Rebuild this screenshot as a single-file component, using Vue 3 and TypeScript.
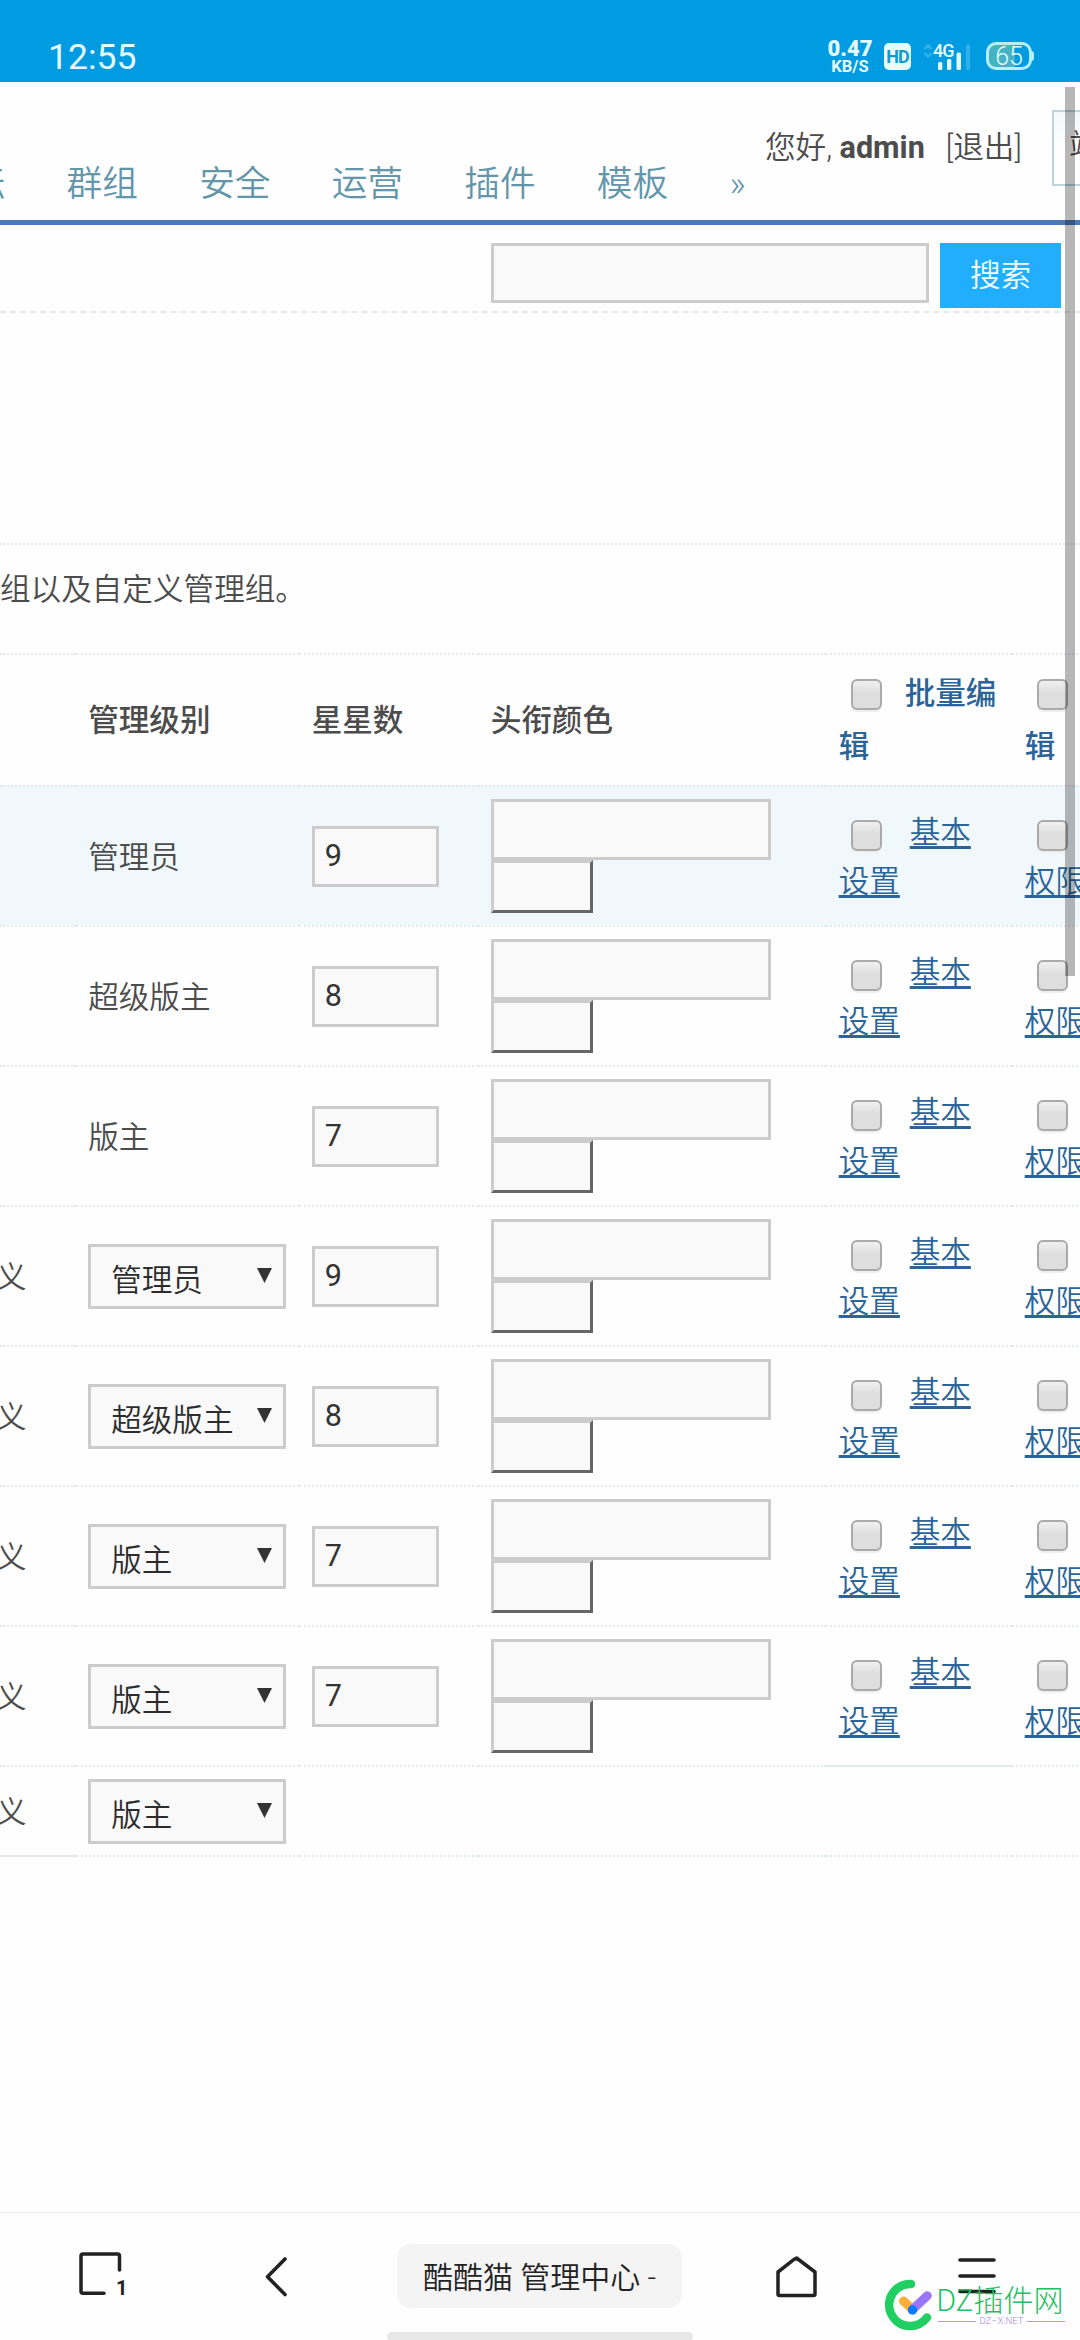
<script setup lang="ts">
interface GroupRow {
  level: string
  stars: string
  custom: boolean
  active?: boolean
  isNew?: boolean
}

const navItems: string[] = ['论坛', '群组', '安全', '运营', '插件', '模板', '»']

const rows: GroupRow[] = [
  { level: '管理员', stars: '9', custom: false, active: true },
  { level: '超级版主', stars: '8', custom: false },
  { level: '版主', stars: '7', custom: false },
  { level: '管理员', stars: '9', custom: true },
  { level: '超级版主', stars: '8', custom: true },
  { level: '版主', stars: '7', custom: true },
  { level: '版主', stars: '7', custom: true },
  { level: '版主', stars: '', custom: true, isNew: true },
]
</script>

<template>
  <div class="screen">
    <div class="status">
      <span class="clock">12:55</span>
      <div class="speed"><b>0.47</b><small>KB/S</small></div>
      <span class="hd">HD</span>
      <div class="signal">
        <svg class="arrows" width="10" height="16" viewBox="0 0 10 16" fill="none" stroke="#35b3ea" stroke-width="2.4">
          <path d="M1.5 6 5 2.5 8.500 6M1.500 10 5 13.500 8.500 10" />
        </svg>
        <span class="net">4G</span>
        <svg class="bars" width="34" height="28" viewBox="0 0 34 28">
          <rect x="1" y="19" width="4.300" height="8" rx="1.500" fill="#e6fdff" />
          <rect x="10" y="16" width="4.300" height="11" rx="1.500" fill="#e6fdff" />
          <rect x="19.500" y="9.500" width="4.500" height="17.500" rx="1.500" fill="#e6fdff" />
          <rect x="29" y="1" width="4" height="26" rx="1.500" fill="#2fb0e8" />
        </svg>
      </div>
      <div class="battery"><span>65</span></div>
    </div>

    <div class="page">
      <header class="top">
        <nav class="nav">
          <a v-for="item in navItems" :key="item">{{ item }}</a>
        </nav>
        <div class="hello">您好, <b>admin</b><span class="logout">[退出]</span></div>
        <div class="site">站点首页</div>
      </header>

      <div class="search">
        <div class="field"></div>
        <button class="go">搜索</button>
      </div>

      <div class="tip">组以及自定义管理组。</div>

      <div class="table">
        <div class="row head">
          <div class="cell"></div>
          <div class="cell">管理级别</div>
          <div class="cell">星星数</div>
          <div class="cell">头衔颜色</div>
          <div v-for="n in 2" :key="n" class="cell ops">
            <div class="line1"><i class="check"></i><span v-if="n === 1">批量编</span></div>
            <div class="line2">辑</div>
          </div>
        </div>

        <div v-for="(row, i) in rows" :key="i" class="row" :class="{ active: row.active, fresh: row.isNew }">
          <div class="cell kind"><span v-if="row.custom">自定义</span></div>
          <div class="cell">
            <div v-if="row.custom" class="select">
              <span>{{ row.level }}</span>
              <svg width="15" height="15" viewBox="0 0 15 15"><path d="M0 0h15L7.500 15z" fill="#333" /></svg>
            </div>
            <span v-else class="level">{{ row.level }}</span>
          </div>
          <div class="cell"><div v-if="!row.isNew" class="stars">{{ row.stars }}</div></div>
          <div class="cell colors">
            <template v-if="!row.isNew">
              <div class="hex"></div>
              <div class="swatch"></div>
            </template>
          </div>
          <div v-for="name in ['基本设置', '权限设置']" :key="name" class="cell ops">
            <template v-if="!row.isNew">
              <div class="line1">
                <i class="check"></i><a v-if="name === '基本设置'">基本</a>
              </div>
              <div class="line2"><a>{{ name === '基本设置' ? '设置' : '权限' }}</a></div>
            </template>
          </div>
        </div>
        <div class="row end">
          <div v-for="n in 6" :key="n" class="cell"></div>
        </div>
      </div>
      <div class="scroll"></div>
    </div>

    <footer class="toolbar">
      <svg class="tabs" width="48" height="48" viewBox="0 0 48 48" fill="none" stroke="#222" stroke-width="3.500" stroke-linecap="round" stroke-linejoin="round">
        <path d="M25 42.200H4q-2 0-2-2V5q0-2 2-2h34.500q2 0 2 2v14" />
        <text x="37" y="44" class="count">1</text>
      </svg>
      <svg class="back" width="24" height="42" viewBox="0 0 24 42" fill="none" stroke="#222" stroke-width="3.600" stroke-linecap="round" stroke-linejoin="round">
        <path d="M20 3 2.500 20.800 20 38.500" />
      </svg>
      <div class="title">酷酷猫 管理中心 -</div>
      <svg class="home" width="44" height="44" viewBox="0 0 44 44" fill="none" stroke="#222" stroke-width="3.500" stroke-linejoin="round">
        <path d="M22.500 3 41 17v22q0 1.500-1.500 1.500h-34Q4 40.500 4 39V17L19.700 4.700Q21.800 2.900 23.600 4.300Z" />
      </svg>
      <svg class="menu" width="40" height="40" viewBox="0 0 40 40" stroke="#222" stroke-width="3.600" stroke-linecap="round">
        <path d="M3 5h34M3 21h34M3 36.500h34" />
      </svg>
      <div class="handle"></div>
    </footer>

    <div class="mark">
      <svg width="50" height="54" viewBox="0 0 50 54" fill="none" stroke-linecap="round">
        <path d="M27 6A21 21 0 1 0 43 39.500" stroke="#20cf62" stroke-width="8.500" />
        <path d="M19.500 23 28.500 31.500" stroke="#fbb034" stroke-width="9" />
        <path d="M28.500 31.500 43.300 17.700" stroke="#9a76fa" stroke-width="9" />
        <circle cx="28.500" cy="32" r="4.700" fill="#077bff" />
      </svg>
      <div class="brand">
        <span class="name">DZ插件网</span>
        <span class="domain"><i></i>DZ–X.NET<i></i></span>
      </div>
    </div>
  </div>
</template>

<style>
body {
  background: #fefefe;
  overflow: hidden;
}
</style>

<style scoped>
.screen {
  position: relative;
  display: flex;
  flex-direction: column;
  width: 1080px;
  height: 2340px;
  overflow: hidden;
  background: #fefefe;
  color: #4c4c4c;
  font-family: Roboto, 'Noto Sans CJK SC', sans-serif;
  font-size: 30.6px;
  font-weight: 350;
  box-sizing: border-box;
}
.screen *,
.screen *::before {
  box-sizing: border-box;
}
.status {
  height: 82px;
  flex: none;
  background: #009be0;
  color: #e6fdff;
  display: flex;
  align-items: flex-start;
  padding-left: 48px;
}
.clock {
  font-size: 35.5px;
  font-weight: 400;
  line-height: 40px;
  margin-top: 37px;
  width: 780px;
}
.speed {
  width: 44px;
  margin-top: 40px;
  display: flex;
  flex-direction: column;
  align-items: center;
  font-weight: 700;
}
.speed b {
  font-size: 22px;
  line-height: 18px;
}
.speed small {
  font-size: 16.5px;
  line-height: 17px;
}
.hd {
  margin: 43px 0 0 12px;
  width: 27px;
  height: 27px;
  border-radius: 5px;
  background: #e6fdff;
  color: #1698cc;
  font-size: 18px;
  font-weight: 700;
  line-height: 28px;
  text-align: center;
  letter-spacing: -1px;
}
.signal {
  position: relative;
  margin: 43px 0 0 12px;
  width: 49px;
  height: 28px;
}
.arrows {
  position: absolute;
  left: 0;
  top: 0;
}
.net {
  position: absolute;
  left: 10px;
  top: -1px;
  font-size: 18px;
  line-height: 18px;
  font-weight: 500;
  letter-spacing: -1px;
}
.bars {
  position: absolute;
  left: 14px;
  top: 0;
}
.battery {
  position: relative;
  margin: 42px 0 0 14px;
  width: 46px;
  height: 28px;
  border: 3px solid #b5f0fa;
  border-radius: 10px;
  background: linear-gradient(90deg, #45b3c4 65%, #009be0 65%);
  font-size: 25px;
  line-height: 23px;
  text-align: center;
}
.battery::before {
  content: '';
  position: absolute;
  right: -5px;
  top: 6px;
  width: 3px;
  height: 10px;
  border-radius: 0 3px 3px 0;
  background: #b5f0fa;
}
.page {
  position: relative;
  flex: 1;
}
.top {
  height: 143px;
  border-bottom: 5px solid #4a78b8;
  display: flex;
  overflow: hidden;
}
.nav {
  width: 765px;
  flex: none;
  display: flex;
  gap: 61.2px;
  padding-top: 77px;
  font-size: 35.7px;
  line-height: 50px;
  color: #6396aa;
}
.nav a {
  flex: none;
}
.nav a:first-child {
  margin-left: -66px;
}
.hello {
  width: 287px;
  flex: none;
  line-height: 44px;
  padding-top: 44px;
  white-space: pre;
}
.hello b {
  font-weight: 700;
}
.logout {
  margin-left: 21px;
}
.site {
  flex: none;
  width: 160px;
  height: 76px;
  margin-top: 28px;
  padding-left: 15px;
  border: 2px solid #bcd3de;
  background: linear-gradient(#f3f8fb, #fefefe 50%);
  line-height: 68px;
}
.search {
  height: 88px;
  padding: 18px 0 0 491px;
  border-bottom: 2px dashed #e8e8e8;
  display: flex;
  align-items: flex-start;
  gap: 11px;
}
.field {
  width: 438px;
  height: 60px;
  border: 3px solid #ccc;
  background: #f9f9f9;
}
.go {
  width: 121px;
  height: 65px;
  padding: 0;
  border: 0;
  background: #22aeff;
  color: #f2fdff;
  font: inherit;
  line-height: 65px;
}
.tip {
  margin-top: 230px;
  height: 110px;
  border-top: 2px dotted #e0ebee;
  line-height: 44px;
  padding-top: 23px;
}
.row {
  display: grid;
  grid-template-columns: 75.5px 223.5px 179px 348px 186px 186px;
  height: 140px;
}
.cell {
  border-top: 2px dotted #dfebee;
  padding-left: 12.7px;
  display: flex;
  align-items: center;
  white-space: nowrap;
}
.head {
  height: 132px;
  font-weight: 500;
}
.head .cell:not(.ops) {
  padding-bottom: 5px;
}
.level,
.kind span {
  margin-bottom: 2px;
}
.active .cell {
  background: #f0f8fc;
}
.fresh {
  height: 90px;
}
.fresh .cell:nth-child(5),
.end .cell:first-child {
  border-top-style: solid;
}
.kind {
  justify-content: flex-end;
  padding: 0 49px 0 0;
}
.end {
  height: 2px;
}
.select {
  width: 198px;
  height: 65px;
  border: 3px solid #ccc;
  background: #f9f9f9;
  color: #2c2c2c;
  display: flex;
  justify-content: space-between;
  align-items: center;
  padding: 3px 11px 0 20px;
}
.select svg {
  margin-bottom: 4px;
}
.stars {
  width: 127px;
  height: 61px;
  border: 3px solid #ccc;
  background: #f9f9f9;
  color: #333;
  padding-left: 10px;
  font-weight: 400;
  line-height: 53px;
}
.colors {
  flex-direction: column;
  align-items: flex-start;
  justify-content: flex-start;
}
.row:not(.head) .colors {
  padding-top: 12px;
}
.head .colors {
  justify-content: center;
}
.hex {
  width: 280px;
  height: 61px;
  border: 3px solid #ccc;
  background: #f9f9f9;
}
.swatch {
  width: 102px;
  height: 53px;
  border: 3px solid;
  border-color: #ccc #666 #666 #ccc;
  background: #f9f9f9;
}
.ops {
  display: flex;
  flex-direction: column;
  align-items: flex-start;
  justify-content: flex-start;
  padding-top: 21px;
  color: #2a6498;
}
.line1 {
  display: flex;
  height: 49px;
  line-height: 50px;
}
.line1 a {
  margin-left: 28px;
}
.line1 span {
  margin-left: 23px;
}
.line2 {
  line-height: 49px;
}
.ops a {
  text-decoration: underline;
  text-decoration-thickness: 3px;
  text-underline-offset: 3px;
}
.check {
  width: 31px;
  height: 31px;
  margin: 12px 0 0 12px;
  border: 2px solid #aaa;
  border-radius: 6px;
  background: linear-gradient(#f0f0f0, #dedede 45%);
  box-shadow: 0 2px 1px #eee;
}
.head .ops {
  padding-top: 12px;
}
.head .line1 {
  height: 53px;
}
.head .line1 span {
  line-height: 53px;
}
.head .line2 {
  line-height: 53px;
}
.scroll {
  position: absolute;
  left: 1065px;
  top: 5px;
  width: 10px;
  height: 889px;
  background: rgba(0, 0, 0, 0.28);
}
.toolbar {
  position: relative;
  height: 128px;
  flex: none;
  border-top: 1px solid #ededed;
  display: flex;
  align-items: flex-start;
  color: #222;
}
.tabs {
  margin: 38px 0 0 79px;
}
.count {
  font: 700 20px Roboto, sans-serif;
  fill: #222;
  stroke: none;
}
.back {
  margin: 43px 0 0 138px;
}
.title {
  width: 285px;
  height: 64px;
  margin: 31px 0 0 108px;
  border-radius: 14px;
  background: #f4f4f4;
  font-size: 30px;
  line-height: 67px;
  text-align: center;
  white-space: nowrap;
}
.home {
  margin: 42px 0 0 92px;
}
.menu {
  margin: 42px 0 0 139px;
}
.handle {
  position: absolute;
  left: 387px;
  top: 119px;
  width: 306px;
  height: 9px;
  border-radius: 4.500px;
  background: #e7e7e7;
}
.mark {
  position: absolute;
  left: 884px;
  top: 2278px;
  display: flex;
}
.brand {
  margin-left: 2px;
  width: 129px;
  display: flex;
  flex-direction: column;
}
.name {
  height: 37px;
  font-family: 'Noto Sans CJK SC', sans-serif;
  font-size: 30px;
  font-weight: 300;
  line-height: 40px;
  color: #22c062;
  white-space: nowrap;
}
.domain {
  display: flex;
  align-items: center;
  justify-content: space-between;
  padding-left: 2px;
  font-size: 9.500px;
  line-height: 12px;
  color: #a58ae0;
}
.domain i {
  width: 38px;
  height: 1px;
  background: #b39be8;
}
</style>
